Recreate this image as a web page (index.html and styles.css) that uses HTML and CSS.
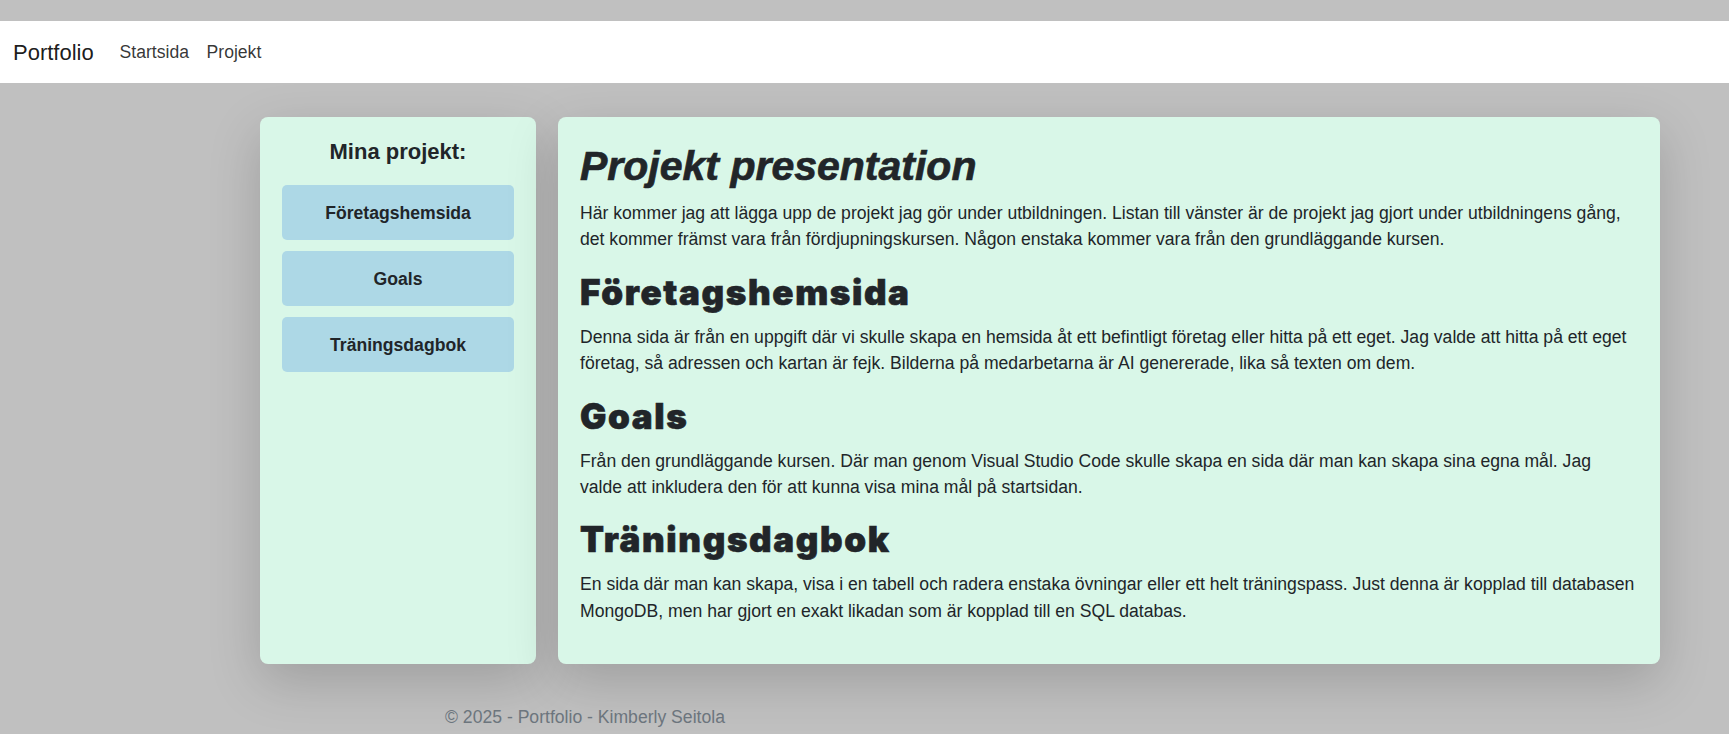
FILE: index.html
```
<!DOCTYPE html>
<html lang="sv">
<head>
<meta charset="utf-8">
<title>Projekt - Portfolio</title>
<link rel="stylesheet" href="styles.css">
</head>
<body>
<nav class="navbar">
  <a class="brand" href="#">Portfolio</a>
  <a class="nav-link" href="#">Startsida</a>
  <a class="nav-link" href="#">Projekt</a>
</nav>
<div class="layout">
  <aside class="card sidebar">
    <h4 class="sidebar-title">Mina projekt:</h4>
    <div class="project-list">
      <a class="project-btn" href="#">Företagshemsida</a>
      <a class="project-btn" href="#">Goals</a>
      <a class="project-btn" href="#">Träningsdagbok</a>
    </div>
  </aside>
  <section class="card main">
    <h1 class="page-title">Projekt presentation</h1>
    <p>Här kommer jag att lägga upp de projekt jag gör under utbildningen. Listan till vänster är de projekt jag gjort under utbildningens gång, det kommer främst vara från fördjupningskursen. Någon enstaka kommer vara från den grundläggande kursen.</p>
    <h2 class="project-title">Företagshemsida</h2>
    <p>Denna sida är från en uppgift där vi skulle skapa en hemsida åt ett befintligt företag eller hitta på ett eget. Jag valde att hitta på ett eget företag, så adressen och kartan är fejk. Bilderna på medarbetarna är AI genererade, lika så texten om dem.</p>
    <h2 class="project-title">Goals</h2>
    <p>Från den grundläggande kursen. Där man genom Visual Studio Code skulle skapa en sida där man kan skapa sina egna mål. Jag valde att inkludera den för att kunna visa mina mål på startsidan.</p>
    <h2 class="project-title">Träningsdagbok</h2>
    <p>En sida där man kan skapa, visa i en tabell och radera enstaka övningar eller ett helt träningspass. Just denna är kopplad till databasen MongoDB, men har gjort en exakt likadan som är kopplad till en SQL databas.</p>
  </section>
</div>
<footer class="footer">© 2025 - Portfolio - Kimberly Seitola</footer>
</body>
</html>
```
FILE: styles.css
```
html {
  overflow: hidden;
}
body {
  margin: 0;
  padding-top: 21px;
  background: #c0c0c0;
  color: #212529;
  font-family: "Liberation Sans", Arial, sans-serif;
  font-size: 17.6px;
  line-height: 26.4px;
}
a {
  text-decoration: none;
  color: inherit;
}
.navbar {
  height: 62px;
  background: #ffffff;
  display: flex;
  align-items: center;
  padding: 0 13px;
}
.brand {
  font-size: 22px;
  line-height: 33px;
  color: rgba(0, 0, 0, 0.9);
  margin-right: 17px;
}
.nav-link {
  padding: 0 8.8px;
  color: rgba(0, 0, 0, 0.8);
}
.layout {
  display: flex;
  gap: 22px;
  margin: 34px 69.5px 0 260px;
}
.card {
  background: #d9f7e8;
  border-radius: 8px;
  box-shadow: 0 17px 52px rgba(0, 0, 0, 0.175);
}
.sidebar {
  width: 276px;
  flex: 0 0 276px;
  box-sizing: border-box;
  padding: 22px;
}
.sidebar-title {
  margin: 0 0 20px;
  font-size: 22px;
  line-height: 26.4px;
  font-weight: bold;
  text-align: center;
}
.project-list {
  display: flex;
  flex-direction: column;
  gap: 11px;
}
.project-btn {
  display: flex;
  align-items: center;
  justify-content: center;
  height: 55px;
  background: #add8e6;
  border-radius: 5px;
  font-weight: bold;
}
.main {
  flex: 1 1 auto;
  min-width: 0;
  padding: 25px 22px 22px 22px;
}
.page-title {
  margin: 0 0 10px;
  font-size: 41px;
  line-height: 48px;
  font-weight: bold;
  font-style: italic;
  -webkit-text-stroke: 0.7px #212529;
}
.main p {
  margin: 0 0 18px;
}
.project-title {
  margin: 0 0 11px;
  font-family: Inter, "DejaVu Sans", sans-serif;
  font-weight: 900;
  font-size: 35px;
  line-height: 42px;
  letter-spacing: 1.6px;
  -webkit-text-stroke: 0.6px #212529;
}
.footer {
  margin-top: 40px;
  padding-left: 445px;
  color: #6c757d;
}
```
